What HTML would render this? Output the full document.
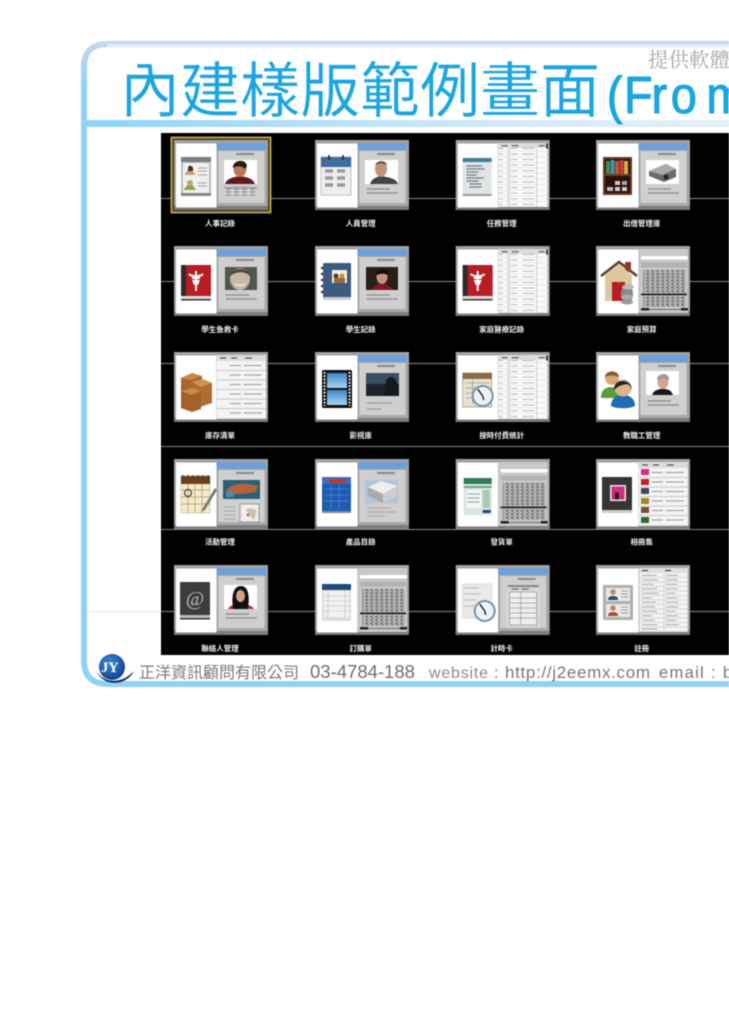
<!DOCTYPE html>
<html lang="zh-Hant"><head><meta charset="utf-8"><title>內建樣版範例畫面</title>
<style>
html,body{margin:0;padding:0;background:#fff;width:729px;height:1030px;overflow:hidden}
svg{display:block;filter:blur(.5px)}
.t{font-family:"Liberation Sans","Noto Sans CJK TC",sans-serif}
.s{font-family:"Liberation Serif","Noto Serif CJK SC",serif}
.l{font-family:"Liberation Sans","Noto Sans CJK TC",sans-serif;font-size:7.5px;font-weight:700;fill:#eee;text-anchor:middle}
</style></head><body>
<svg width="729" height="1030" viewBox="0 0 729 1030" xmlns="http://www.w3.org/2000/svg">
<defs>
<linearGradient id="bar" x1="0" x2="1" y1="0" y2="0"><stop offset="0" stop-color="#8fd3f6"/><stop offset=".35" stop-color="#b5e0f8"/><stop offset=".7" stop-color="#d8ecfb"/><stop offset="1" stop-color="#e4f1fc"/></linearGradient>
<linearGradient id="top" gradientUnits="userSpaceOnUse" x1="0" x2="0" y1="41" y2="49"><stop offset="0" stop-color="#b9d0ec"/><stop offset=".5" stop-color="#dceafa"/><stop offset="1" stop-color="#fff"/></linearGradient>
<linearGradient id="cor" gradientUnits="userSpaceOnUse" x1="0" x2="0" y1="41" y2="90"><stop offset="0" stop-color="#c4d8f1"/><stop offset="1" stop-color="#8fd2f5"/></linearGradient>
<linearGradient id="sky" x1="0" x2="0" y1="0" y2="1"><stop offset="0" stop-color="#3f86c8"/><stop offset="1" stop-color="#a7d3ef"/></linearGradient>
<radialGradient id="ball" cx=".4" cy=".35" r=".7"><stop offset="0" stop-color="#3d88d8"/><stop offset="1" stop-color="#0d3f8c"/></radialGradient>
<pattern id="rows" width="52" height="5.6" patternUnits="userSpaceOnUse"><rect width="52" height="5.6" fill="#e6e6e6"/><rect y=".4" x="1" width="50" height="4.6" fill="#fafafa"/><path d="M3 2.8h7M15 2.8h12M39 2.8h8" stroke="#999" stroke-width="1" stroke-dasharray="1.2 .5"/></pattern>
<pattern id="grid" width="5" height="3.4" patternUnits="userSpaceOnUse"><rect width="5" height="3.4" fill="#bcbcbc"/><rect width="3" height="1.5" fill="#6e6e6e"/><rect y="1.9" x="1" width="3" height="1" fill="#8a8a8a"/></pattern>

<symbol id="base" width="94" height="70" overflow="visible"><rect width="94" height="70" fill="#a2a2a2"/><rect y="66" width="94" height="4" fill="#7d7d7d"/><rect x="2" y="3.5" width="40.5" height="64" fill="#fff"/></symbol>

<symbol id="form" width="94" height="70" overflow="visible"><rect x="42.5" y="3" width="49.5" height="7" fill="#6d9fda"/><rect x="42.5" y="10" width="49.5" height="56" fill="#a8a8a8"/><rect x="44.5" y="11" width="46" height="55" fill="#cfcfcf"/><rect x="62" y="13" width="18" height="2" fill="#8a8a8a"/><rect x="44.5" y="63" width="46" height="3" fill="#a9a9a9"/></symbol>

<symbol id="tbl" width="94" height="70" overflow="visible"><rect x="42" y="3" width="50" height="64" fill="#dcdcdc"/><rect x="43" y="8" width="49" height="59" fill="url(#rows)"/><path d="M46 5.7h6M56 5.7h7M83 5.7h6" stroke="#555" stroke-width="1.2"/><rect x="90.5" y="3.5" width="1.6" height="5" fill="#222"/><path d="M53.5 8v59M81 8v59" stroke="#bbb" stroke-width=".6"/></symbol>

<symbol id="tbl6" width="94" height="70" overflow="visible"><rect x="42" y="3" width="50" height="64" fill="#dcdcdc"/><path d="M46 6h6M57 6h6M71 6h7" stroke="#555" stroke-width="1.2"/><rect x="43" y="9" width="49" height="57" fill="#f4f4f4"/><path d="M43 18.5h49M43 28h49M43 37.500h49M43 47h49M43 56.500h49" stroke="#bbb" stroke-width=".8"/><path d="M56 13.500h11M70 13.500h18M56 23h11M70 23h18M56 32.500h11M70 32.500h18M56 42h11M70 42h18M56 51.500h11M70 51.500h18M56 61h11M70 61h18" stroke="#777" stroke-width="1" stroke-dasharray="1.300 .5"/></symbol>

<symbol id="sheet" width="94" height="70" overflow="visible"><rect x="43" y="3" width="49" height="64" fill="#c9c9c9"/><rect x="45" y="10" width="47" height="3.500" fill="#fff"/><rect x="45" y="16.500" width="46" height="5" fill="#b2b2b2"/><rect x="47" y="24" width="43" height="23" fill="url(#grid)"/><rect x="45" y="47.500" width="46" height="1.800" fill="#222"/><rect x="47" y="50" width="43" height="11" fill="url(#grid)"/><rect x="45" y="62" width="8" height="2.500" fill="#222"/><rect x="85" y="62" width="7" height="2.500" fill="#222"/><rect x="53" y="63" width="32" height="1" fill="#666"/></symbol>

<symbol id="txt2" width="94" height="70" overflow="visible"><path d="M52 49h23M52 53h31" stroke="#777" stroke-width="1.300" stroke-dasharray="2 .6"/></symbol>

<symbol id="man1" width="94" height="70" overflow="visible"><rect x="50" y="20" width="33" height="24" fill="#fff"/><path d="M51 44c2-6 9-7 15-8 6 1 13 2 15 8z" fill="#5f1a1e"/><ellipse cx="66" cy="29" rx="6.500" ry="8" fill="#b97a58"/><path d="M59 28c-1-8 13-10 14-2l-2 3c-3-3-7-4-12-1z" fill="#2c1a10"/><rect x="50" y="47" width="33" height="1" fill="#888"/><path d="M52 49h29M52 52h29M52 55h29" stroke="#777" stroke-width="1" stroke-dasharray="5 3"/></symbol>
<symbol id="man2" width="94" height="70" overflow="visible"><rect x="50" y="20" width="33" height="24" fill="#fff"/><path d="M55 44c2-6 7-7 11-8 6 1 15 2 17 8z" fill="#444"/><ellipse cx="66" cy="29" rx="6" ry="8" fill="#c09478"/><path d="M60 25c2-5 11-5 12 0-4-2-8-2-12 0z" fill="#6a5040"/></symbol>
<symbol id="proj" width="94" height="70" overflow="visible"><rect x="50" y="20" width="33" height="24" fill="#fff"/><path d="M53 31l17-7 10 5v8l-12 5-15-6z" fill="#6b6b6b"/><path d="M53 31l17-7 10 5-14 6z" fill="#a9a9a9"/><circle cx="70" cy="37" r="2.500" fill="#222"/></symbol>
<symbol id="kid" width="94" height="70" overflow="visible"><rect x="51" y="21" width="32" height="23" fill="#4b5a50"/><ellipse cx="66" cy="33" rx="10" ry="11" fill="#c9b8a6"/><path d="M56 30c1-9 18-10 20 0-5-5-14-5-20 0z" fill="#5c4532"/><path d="M61 38c3 2 7 2 10 0" stroke="#fff" stroke-width="1.200" fill="none"/></symbol>
<symbol id="girl" width="94" height="70" overflow="visible"><rect x="51" y="21" width="32" height="23" fill="#2a1f18"/><path d="M57 44c2-5 6-6 9-6 5 0 10 2 12 6z" fill="#8a1526"/><ellipse cx="67" cy="31" rx="5.500" ry="7" fill="#c4937a"/><path d="M60 30c0-9 15-9 14 0-3-3-10-3-14 0z" fill="#111"/></symbol>
<symbol id="movie" width="94" height="70" overflow="visible"><rect x="51" y="21" width="33" height="23" fill="#1d242c"/><rect x="51" y="21" width="33" height="11" fill="#3a4d60"/><path d="M69 44c0-14 3-19 7-19s8 6 8 19z" fill="#15181c"/><path d="M52 51h26M52 57h15" stroke="#999" stroke-width="1.500" stroke-dasharray="3 .7"/></symbol>
<symbol id="lady" width="94" height="70" overflow="visible"><rect x="50" y="19" width="33" height="24" fill="#fff"/><path d="M56 43c2-5 6-6 11-6s8 1 10 6z" fill="#1a1a1a"/><ellipse cx="67" cy="30" rx="5.500" ry="7" fill="#d3a592"/><path d="M61 28c0-8 13-8 12 0-3-2-9-2-12 0z" fill="#9b9b9b"/></symbol>
<symbol id="event" width="94" height="70" overflow="visible"><rect x="49" y="21" width="37" height="19" fill="#2d5f78"/><path d="M52 31c8-8 20-7 32-4l-2 6c-10 2-20 2-30 3z" fill="#b3643a"/><rect x="52" y="33" width="8" height="5" fill="#4a90b0"/><rect x="66" y="45" width="19" height="18" fill="#eee" stroke="#999"/><path d="M72 51c3-3 8-2 11 1l-3 9-4-4z" fill="#c9c3a8"/><circle cx="74" cy="56" r="1.200" fill="#c33"/><path d="M50 48h12M50 52h12M50 56h12M50 60h12" stroke="#999" stroke-width="1" stroke-dasharray="2 1"/></symbol>
<symbol id="proj2" width="94" height="70" overflow="visible"><rect x="50" y="21" width="33" height="23" fill="#b0c4dc"/><path d="M53 28l13-6 16 5v10l-14 7-15-7z" fill="#eee"/><path d="M53 28l15 7v9l-15-7z" fill="#aaa"/><path d="M68 35l14-8v10l-14 7z" fill="#ccc"/><path d="M52 49h24M52 53h29M52 57h18" stroke="#999" stroke-width="1" stroke-dasharray="2 .6"/></symbol>
<symbol id="wom" width="94" height="70" overflow="visible"><rect x="50" y="20" width="33" height="24" fill="#fff"/><path d="M54 44c2-4 7-5 12-5s12 1 14 5z" fill="#c52b3a"/><path d="M59 44c-2-15 1-23 8-23s9 9 7 23z" fill="#111"/><ellipse cx="66.500" cy="31" rx="4.500" ry="6" fill="#d4a284"/></symbol>
<symbol id="clockf" width="94" height="70" overflow="visible"><rect x="52" y="20" width="31" height="2" fill="#888"/><rect x="51" y="24" width="33" height="39" fill="#d8d8d8"/><rect x="54" y="27" width="27" height="33" fill="#eee" stroke="#888" stroke-width=".6"/><path d="M54 33h27M54 38h27M54 43h27M54 48h27M54 53h27M65 27v33" stroke="#999" stroke-width=".7"/><path d="M56 24h7M66 24h7" stroke="#555" stroke-width="1"/></symbol>
<symbol id="tbl2" width="94" height="70" overflow="visible"><rect x="43" y="3" width="49" height="64" fill="#dedede"/><rect x="44" y="8" width="47" height="58" fill="#f3f3f3"/><path d="M44 12.500h47M44 17h47M44 21.500h47M44 26h47M44 30.500h47M44 35h47M44 39.500h47M44 44h47M44 48.500h47M44 53h47M44 57.500h47M44 62h47M68 8v58" stroke="#bbb" stroke-width=".5"/><path d="M46 5.500h6M69 5.500h6" stroke="#444" stroke-width="1.200"/><path d="M46 10.300h15M70 10.300h12M46 14.800h16M70 14.800h12M46 19.300h12M70 19.300h11M46 23.800h15M70 23.800h12M46 28.300h17M70 28.300h9M46 32.800h10M70 32.800h11M46 37.300h14M70 37.300h12M46 41.800h13M70 41.800h12M46 46.300h15M70 46.300h10M46 50.800h10M70 50.800h12M46 55.300h13M70 55.300h10M46 59.800h15M70 59.800h13M46 64h15" stroke="#888" stroke-width=".9" stroke-dasharray="1.500 .4"/></symbol>

<symbol id="card" width="94" height="70" overflow="visible"><rect x="7" y="17" width="30" height="38" rx="1" fill="#bdbdbd"/><rect x="7" y="17" width="30" height="5" fill="#7d7d7d"/><rect x="9" y="23" width="26" height="30" fill="#f0f0f0"/><rect x="7" y="53" width="30" height="3" fill="#888"/><path d="M11 35c0-2 1-3 2-3 0-5 6-5 6 0 1 0 2 1 2 3z" fill="#c9a076"/><path d="M14 28c0-3 4-3 5 0v3h-5z" fill="#4a2a18"/><path d="M10 50c0-2 2-3 3-4 0-4 6-4 6 0 1 1 2 2 3 4z" fill="#8aa84a"/><circle cx="16" cy="43" r="3" fill="#c9a076"/><path d="M24 28h9M24 31h9M24 35h9M24 43h9M24 46h9" stroke="#888" stroke-width=".8"/></symbol>
<symbol id="cal" width="94" height="70" overflow="visible"><rect x="6" y="17" width="30" height="38" fill="#eee" stroke="#aaa" stroke-width=".7"/><rect x="6" y="17" width="30" height="10" fill="#3e6d9e"/><path d="M14 15v5M28 15v5" stroke="#223" stroke-width="1.500"/><path d="M10 31h8M22 31h8M10 38h8M22 38h8M10 45h8M22 45h8" stroke="#999" stroke-width="3.500"/></symbol>
<symbol id="list" width="94" height="70" overflow="visible"><rect x="7" y="18" width="29" height="38" fill="#dfe4e4"/><rect x="7" y="18" width="29" height="4" fill="#3d7fa0"/><rect x="7" y="54" width="29" height="2" fill="#999"/><path d="M11 26h15M11 29h18M11 32h12M11 35h10M11 38h17M11 41h12M14 44h12M14 47h12" stroke="#566" stroke-width="1.300" stroke-dasharray="1.800 .5"/></symbol>
<symbol id="shelf" width="94" height="70" overflow="visible"><rect x="7" y="17" width="29" height="38" fill="#6b3a22"/><rect x="9" y="19" width="25" height="15" fill="#2a1208"/><rect x="9" y="36" width="25" height="17" fill="#2a1208"/><rect x="10" y="21" width="4" height="13" fill="#3b8f5e"/><rect x="14.500" y="20" width="4" height="14" fill="#4a8fb0"/><rect x="19" y="21" width="4" height="13" fill="#c05a3a"/><rect x="23.500" y="20" width="4" height="14" fill="#c04040"/><rect x="28" y="21" width="4" height="13" fill="#d8b040"/><rect x="19" y="41" width="5" height="4" fill="#ccc"/><rect x="26" y="41" width="5" height="4" fill="#9ac"/><rect x="11" y="47" width="6" height="4" fill="#bbb"/><rect x="19" y="47" width="5" height="4" fill="#ccc"/><rect x="26" y="47" width="5" height="4" fill="#ccc"/></symbol>
<symbol id="red" width="94" height="70" overflow="visible"><rect x="7" y="19" width="30" height="34" rx="1" fill="#b81c24"/><rect x="7" y="19" width="5" height="34" fill="#2c2c2c"/><rect x="7" y="50" width="30" height="3" fill="#ddd"/><rect x="7" y="53" width="30" height="1.500" fill="#333"/><path d="M15 28c3 3 11 3 14 0M18 32h8M22 25v20" stroke="#fff" stroke-width="2" fill="none"/><path d="M18 34h8l-2 5h-4z" fill="#fff"/></symbol>
<symbol id="note" width="94" height="70" overflow="visible"><rect x="8" y="17" width="28" height="36" rx="1" fill="#3d5a80"/><path d="M8 22h-2M8 28h-2M8 34h-2M8 40h-2M8 46h-2" stroke="#222" stroke-width="2"/><rect x="17" y="24" width="15" height="13" fill="#f5f0dd"/><circle cx="21" cy="30" r="2.500" fill="#5a3a20"/><circle cx="27" cy="30" r="2.500" fill="#c09040"/><rect x="19" y="32" width="11" height="5" fill="#9a6a3a"/><rect x="8" y="51" width="28" height="3" fill="#ccc"/></symbol>
<symbol id="house" width="94" height="70" overflow="visible"><path d="M5 30L23 16l18 14" fill="none" stroke="#5a3f28" stroke-width="2.500"/><rect x="29" y="16" width="6" height="10" fill="#8a3a28"/><path d="M9 29L23 18l13 11v26H9z" fill="#d9c8a0"/><rect x="16" y="36" width="13" height="19" fill="#b81c24"/><ellipse cx="31" cy="48" rx="6" ry="9" fill="#8a8a8a"/><ellipse cx="32" cy="41" rx="6" ry="2.500" fill="#bbb"/><ellipse cx="31" cy="51" rx="6" ry="2.500" fill="#aaa"/><ellipse cx="31" cy="56" rx="6" ry="2.500" fill="#999"/></symbol>
<symbol id="box" width="94" height="70" overflow="visible"><path d="M7 26l11-5 10 3v16l-21 3z" fill="#a9652d"/><path d="M7 26l11-5 10 3-11 4z" fill="#c98a48"/><path d="M18 30l10-3 10 4v20l-12 4-8-6z" fill="#b06d31"/><path d="M28 27l10 4-11 4-9-5z" fill="#cf9250"/><path d="M7 39l11-3 9 3v18l-9 3-11-4z" fill="#a4602a"/><path d="M7 39l11-3 9 3-10 4z" fill="#c98a48"/></symbol>
<symbol id="film" width="94" height="70" overflow="visible"><rect x="7" y="18" width="30" height="38" rx="1.500" fill="#111"/><rect x="12" y="21" width="20" height="15" fill="url(#sky)"/><rect x="12" y="38" width="20" height="15" fill="url(#sky)"/><path d="M9.500 20v34M34.500 20v34" stroke="#eee" stroke-width="2" stroke-dasharray="1.800 1.500"/></symbol>
<symbol id="clk" width="94" height="70" overflow="visible"><rect x="7" y="21" width="29" height="34" fill="#e8e0d0" stroke="#a08a6c" stroke-width=".7"/><rect x="7" y="21" width="29" height="6" fill="#8c6c48"/><path d="M10 31h24M10 36h14M10 41h14M10 46h14M17 28v24" stroke="#a89a86" stroke-width=".8"/><circle cx="27" cy="44" r="11" fill="#7690ad"/><circle cx="27" cy="44" r="9" fill="#eef2f7"/><path d="M27 44l-5-7M27 44l1 4" stroke="#111" stroke-width="1.300"/></symbol>
<symbol id="ppl" width="94" height="70" overflow="visible"><path d="M5 46c0-8 4-10 9-11 6 0 10 3 10 11z" fill="#5d9a3a"/><circle cx="16" cy="26" r="7" fill="#d8a878"/><path d="M9 25c0-7 14-7 14 0-4-2-10-2-14 0z" fill="#7d5a30"/><path d="M15 54c0-8 6-11 12-11s12 3 12 11c-6 3-18 3-24 0z" fill="#1d6db5"/><circle cx="27" cy="36" r="8.500" fill="#e0b090"/><path d="M18 38c-1-12 18-12 18 0-1-4-3-5-5-6-4 1-8 1-13 6z" fill="#222"/></symbol>
<symbol id="calpen" width="94" height="70" overflow="visible"><rect x="7" y="17" width="29" height="37" fill="#f4ecc8" stroke="#aa9" stroke-width=".5"/><rect x="7" y="17" width="29" height="8" fill="#6a4018"/><path d="M9 16v4M14 16v4M19 16v4M24 16v4M29 16v4M34 16v4" stroke="#444" stroke-width="1.300"/><path d="M7 31h29M7 38h29M7 45h29M14 25v29M21 25v29M28 25v29" stroke="#a89878" stroke-width=".7"/><circle cx="14" cy="34" r="3.500" fill="none" stroke="#444" stroke-width="1.200"/><path d="M41 29L29 49l-2 4 4-2L43 31z" fill="#777"/></symbol>
<symbol id="cat" width="94" height="70" overflow="visible"><rect x="7" y="18" width="29" height="34" fill="#1f5bb0"/><rect x="7" y="18" width="29" height="7" fill="#3d6fb8"/><rect x="14" y="20" width="16" height="4" fill="#c8302c"/><path d="M10 30h24M10 36h24M10 42h24M16 26v24M24 26v24" stroke="#4f8ad0" stroke-width=".7"/><rect x="7" y="52" width="29" height="2" fill="#888"/></symbol>
<symbol id="greenf" width="94" height="70" overflow="visible"><rect x="8" y="19" width="28" height="37" fill="#d9e6e0"/><rect x="8" y="19" width="28" height="6" fill="#2f7d55"/><rect x="8" y="27" width="28" height="2" fill="#6aa488"/><rect x="11" y="31" width="15" height="18" fill="#f2f6f4"/><rect x="27" y="31" width="7" height="18" fill="#a8c8b8"/><path d="M12 35h12M12 39h12M12 43h12" stroke="#779" stroke-width=".8"/><rect x="27" y="51" width="8" height="3" fill="#2a3a80"/></symbol>
<symbol id="album" width="94" height="70" overflow="visible"><rect x="6" y="18" width="30" height="36" fill="#353535"/><rect x="6" y="51" width="30" height="3" fill="#ccc"/><rect x="14" y="26" width="16" height="16" fill="#e6e6e6"/><rect x="15.500" y="27.500" width="13" height="13" fill="#d62a80"/><path d="M19 40.500v-7h4v7z" fill="#221"/></symbol>
<symbol id="at" width="94" height="70" overflow="visible"><rect x="6" y="17" width="30" height="36" fill="#3c3c3c"/><rect x="6" y="50" width="30" height="3" fill="#bbb"/><rect x="6" y="53" width="30" height="1.500" fill="#333"/><text class="s" x="21" y="40" font-size="20" font-style="italic" fill="#bbb" text-anchor="middle">@</text></symbol>
<symbol id="bluet" width="94" height="70" overflow="visible"><rect x="7" y="19" width="29" height="37" fill="#ddd"/><rect x="7" y="19" width="29" height="6" fill="#1d4a78"/><rect x="9" y="26" width="25" height="26" fill="#f2f2f2"/><path d="M13 26v26M30 26v26M9 31h25M9 36h25M9 41h25M9 46h25" stroke="#bbb" stroke-width=".6"/></symbol>
<symbol id="clk2" width="94" height="70" overflow="visible"><rect x="7" y="19" width="29" height="34" fill="#eaeaea" stroke="#ccc" stroke-width=".6"/><path d="M9 23h14M9 29h16M9 35h12M9 41h10" stroke="#aaa" stroke-width="1" stroke-dasharray="2 .5"/><circle cx="29" cy="46" r="11" fill="#7690ad"/><circle cx="29" cy="46" r="9" fill="#eef2f7"/><path d="M29 46l-5-7M29 46l1 4" stroke="#111" stroke-width="1.300"/></symbol>
<symbol id="cont" width="94" height="70" overflow="visible"><rect x="7" y="20" width="30" height="35" fill="#b0b0b0"/><rect x="10" y="23" width="24" height="13" fill="#e8e8e8"/><rect x="10" y="39" width="24" height="13" fill="#e8e8e8"/><circle cx="17" cy="27" r="2.800" fill="#c08a60"/><path d="M12 35c0-3 2-4 5-4s5 1 5 4z" fill="#274a78"/><circle cx="17" cy="43" r="2.800" fill="#c08a60"/><path d="M12 51c0-3 2-4 5-4s5 1 5 4z" fill="#b04a2a"/><path d="M25 26h7M25 29h7M25 32h7M25 42h7M25 45h7M25 48h7" stroke="#888" stroke-width=".8"/></symbol>
</defs>

<!-- frame -->
<path d="M84 85V660Q84 684 108 684H729" fill="none" stroke="#8fd2f5" stroke-width="6"/>
<path d="M84 90V67Q84 44 108 44" fill="none" stroke="url(#cor)" stroke-width="6"/>
<rect x="107" y="41" width="622" height="8" fill="url(#top)"/>
<rect x="81" y="120" width="648" height="7" fill="url(#bar)"/>

<!-- title -->
<text class="s" x="648" y="67" font-size="20.500" fill="#a8a8a8">提供軟體</text>
<text class="t" x="120" y="112" font-size="60" fill="#1ba6e2" stroke="#fff" stroke-width=".2">內建樣版範例畫面</text>
<g transform="translate(606 113) scale(.9 1)"><text class="t" x="1 20 50.500 72 111.600" y="0" font-size="52" fill="#1ba6e2" stroke="#1ba6e2" stroke-width="1.100">(From</text></g>

<!-- black panel -->
<rect x="161" y="133" width="568" height="522" fill="#000"/>
<path d="M161 198.500H729M161 281.500H729M161 363.500H729M161 446.500H729M161 529.500H729M161 611.500H729" stroke="#b8b8b8" stroke-width=".8"/>
<path d="M87 611.500H161" stroke="#ddd" stroke-width=".8"/>

<rect x="171.500" y="137.500" width="99" height="75" fill="#3a3a2a" stroke="#c9a93e" stroke-width="1.800"/>

<!-- row 1 -->
<g transform="translate(174,140)"><use href="#base"/><use href="#form"/><use href="#card"/><use href="#man1"/></g>
<g transform="translate(315,140)"><use href="#base"/><use href="#form"/><use href="#cal"/><use href="#man2"/><use href="#txt2"/></g>
<g transform="translate(455.700,140)"><use href="#base"/><use href="#tbl"/><use href="#list"/></g>
<g transform="translate(596,140)"><use href="#base"/><use href="#form"/><use href="#shelf"/><use href="#proj"/><use href="#txt2"/></g>
<!-- row 2 -->
<g transform="translate(174,246)"><use href="#base"/><use href="#form"/><use href="#red"/><use href="#kid"/><use href="#txt2"/></g>
<g transform="translate(315,246)"><use href="#base"/><use href="#form"/><use href="#note"/><use href="#girl"/><use href="#txt2"/></g>
<g transform="translate(455.700,246)"><use href="#base"/><use href="#tbl"/><use href="#red"/></g>
<g transform="translate(596,246)"><use href="#base"/><use href="#sheet"/><use href="#house"/></g>
<!-- row 3 -->
<g transform="translate(174,352)"><use href="#base"/><use href="#tbl6"/><use href="#box"/></g>
<g transform="translate(315,352)"><use href="#base"/><use href="#form"/><use href="#film"/><use href="#movie"/></g>
<g transform="translate(455.700,352)"><use href="#base"/><use href="#tbl"/><use href="#clk"/></g>
<g transform="translate(596,352)"><use href="#base"/><use href="#form"/><use href="#ppl"/><use href="#lady"/><use href="#txt2"/></g>
<!-- row 4 -->
<g transform="translate(174,459)"><use href="#base"/><use href="#form"/><use href="#calpen"/><use href="#event"/></g>
<g transform="translate(315,459)"><use href="#base"/><use href="#form"/><use href="#cat"/><use href="#proj2"/></g>
<g transform="translate(455.700,459)"><use href="#base"/><use href="#sheet"/><use href="#greenf"/></g>
<g transform="translate(596,459)"><use href="#base"/><use href="#tbl6"/><use href="#album"/>
<rect x="45" y="10" width="8" height="6" fill="#d6308a"/><rect x="45" y="20" width="8" height="6" fill="#c52020"/><rect x="45" y="29" width="8" height="6" fill="#445"/><rect x="45" y="39" width="8" height="6" fill="#a08a20"/><rect x="45" y="48" width="8" height="6" fill="#7a4a3a"/><rect x="45" y="58" width="8" height="6" fill="#2e6a30"/></g>
<!-- row 5 -->
<g transform="translate(174,565)"><use href="#base"/><use href="#form"/><use href="#at"/><use href="#wom"/><use href="#txt2"/></g>
<g transform="translate(315,565)"><use href="#base"/><use href="#sheet"/><use href="#bluet"/></g>
<g transform="translate(455.700,565)"><use href="#base"/><use href="#form"/><use href="#clk2"/><use href="#clockf"/></g>
<g transform="translate(596,565)"><use href="#base"/><use href="#tbl2"/><use href="#cont"/></g>

<!-- labels -->
<text class="l" x="220" y="226">人事記錄</text><text class="l" x="360.700" y="226">人員管理</text><text class="l" x="501.700" y="226">任務管理</text><text class="l" x="641.700" y="226">出借管理庫</text>
<text class="l" x="220" y="332">學生急救卡</text><text class="l" x="360.700" y="332">學生記錄</text><text class="l" x="501.700" y="332">家庭醫療記錄</text><text class="l" x="641.700" y="332">家庭預算</text>
<text class="l" x="220" y="438">庫存清單</text><text class="l" x="360.700" y="438">影視庫</text><text class="l" x="501.700" y="438">按時付費統計</text><text class="l" x="641.700" y="438">教職工管理</text>
<text class="l" x="220" y="544.500">活動管理</text><text class="l" x="360.700" y="544.500">產品目錄</text><text class="l" x="501.700" y="544.500">發貨單</text><text class="l" x="641.700" y="544.500">相冊集</text>
<text class="l" x="220" y="651">聯絡人管理</text><text class="l" x="360.700" y="651">訂購單</text><text class="l" x="501.700" y="651">計時卡</text><text class="l" x="641.700" y="651">註冊</text>

<!-- footer -->
<path d="M96 670c5 12 24 16 38 1-8 16-32 16-38-1z" fill="#10335f"/>
<circle cx="112" cy="667" r="13" fill="url(#ball)"/>
<text class="s" x="101" y="672" font-size="14.500" font-weight="700" fill="#fff">JY</text>
<text class="t" x="139" y="678" font-size="16" fill="#7a7a7a">正洋資訊顧問有限公司</text>
<text class="t" x="310" y="678" font-size="18.500" fill="#6e6e6e">03-4784-188</text>
<text class="t" x="429" y="678" font-size="16" textLength="59" fill="#8a8a8a">website</text>
<text class="t" x="494" y="678" font-size="16" fill="#777">:</text>
<text class="t" x="505" y="678" font-size="17" textLength="145" fill="#777">http://j2eemx.com</text>
<text class="t" x="659" y="678" font-size="16.500" textLength="73" fill="#777">email : b</text>
</svg>
</body></html>
